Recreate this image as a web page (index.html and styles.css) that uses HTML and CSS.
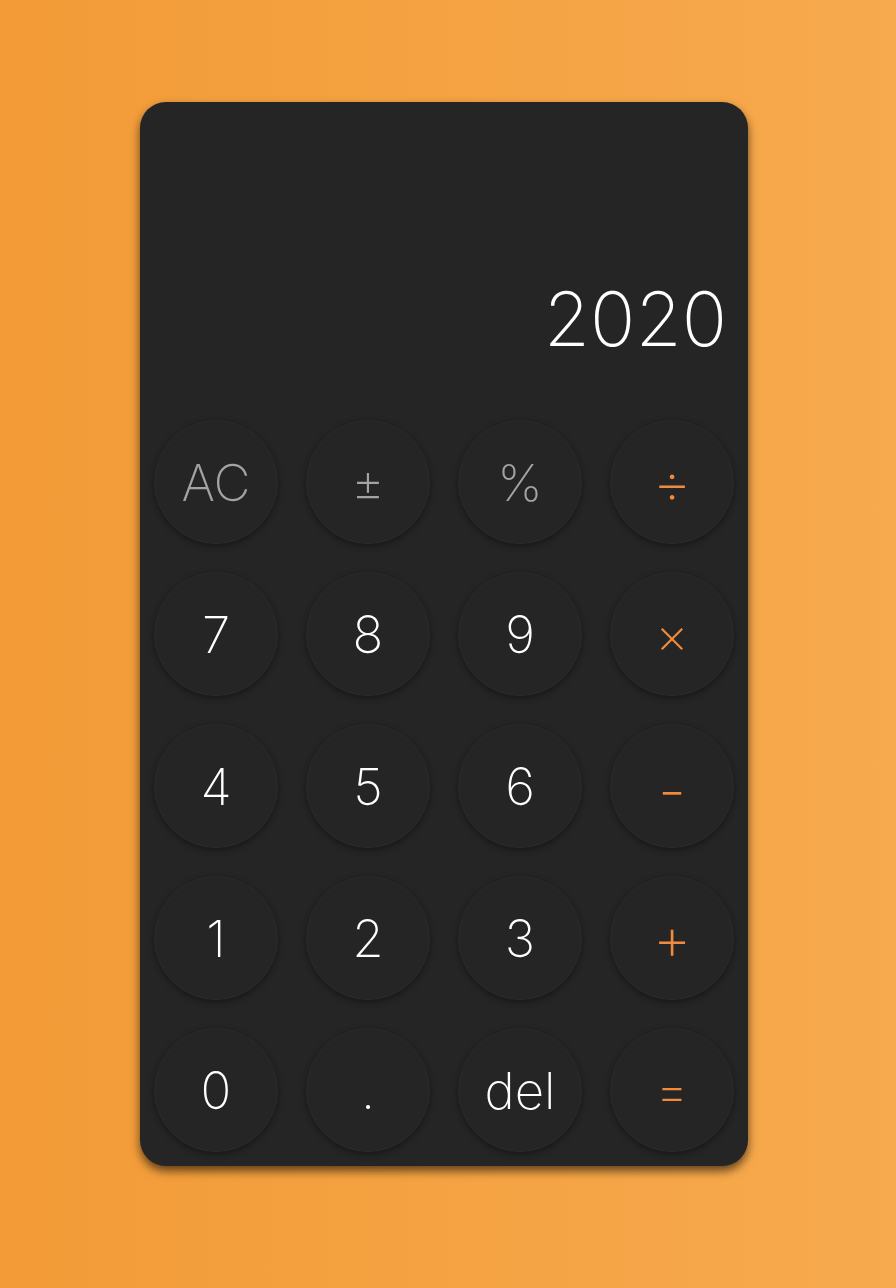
FILE: index.html
```html
<!DOCTYPE html>
<html>
<head>
<meta charset="utf-8">
<link rel="stylesheet" href="styles.css">
</head>
<body>
<div class="calc">
  <div class="display"><span class="value">2020</span></div>
  <div class="keys">
    <button class="key fn">AC</button>
    <button class="key fn">±</button>
    <button class="key fn">%</button>
    <button class="key op big">÷</button>
    <button class="key">7</button>
    <button class="key">8</button>
    <button class="key">9</button>
    <button class="key op">×</button>
    <button class="key">4</button>
    <button class="key">5</button>
    <button class="key">6</button>
    <button class="key op minus">-</button>
    <button class="key">1</button>
    <button class="key">2</button>
    <button class="key">3</button>
    <button class="key op big">+</button>
    <button class="key">0</button>
    <button class="key">.</button>
    <button class="key">del</button>
    <button class="key op">=</button>
  </div>
</div>
</body>
</html>
```
FILE: styles.css
```css
html, body {
  margin: 0;
  padding: 0;
}
body {
  width: 896px;
  height: 1288px;
  background: linear-gradient(to right, #f29b37, #f7aa4e);
  font-family: Inter, Lato, sans-serif;
  overflow: hidden;
}
.calc {
  width: 608px;
  margin: 102px 0 0 140px;
  background: #252525;
  border-radius: 26px;
  box-shadow: 0 5px 10px rgba(0, 0, 0, 0.6);
  padding-bottom: 14px;
}
.display {
  height: 318px;
  box-sizing: border-box;
  padding: 180px 21px 0 0;
  text-align: right;
}
.value {
  font-size: 75px;
  line-height: 74px;
  font-weight: 200;
  color: #ffffff;
}
.keys {
  display: grid;
  grid-template-columns: repeat(4, 124px);
  gap: 28px;
  padding: 0 14px;
}
.key {
  width: 124px;
  height: 124px;
  border-radius: 50%;
  border: 1px solid #2b2b2b;
  background: #252525;
  box-shadow: 0 2px 6px rgba(0, 0, 0, 0.4);
  color: #ffffff;
  font-family: Inter, Lato, sans-serif;
  font-weight: 200;
  font-size: 51px;
  display: flex;
  align-items: center;
  justify-content: center;
  padding: 0;
}
.key.fn {
  color: #a3a3a3;
}
.key.op {
  color: #f08a3c;
}
.key.op.big {
  font-size: 60px;
}
.key.op.minus {
  font-size: 64px;
  padding-top: 6px;
  box-sizing: border-box;
}
```
